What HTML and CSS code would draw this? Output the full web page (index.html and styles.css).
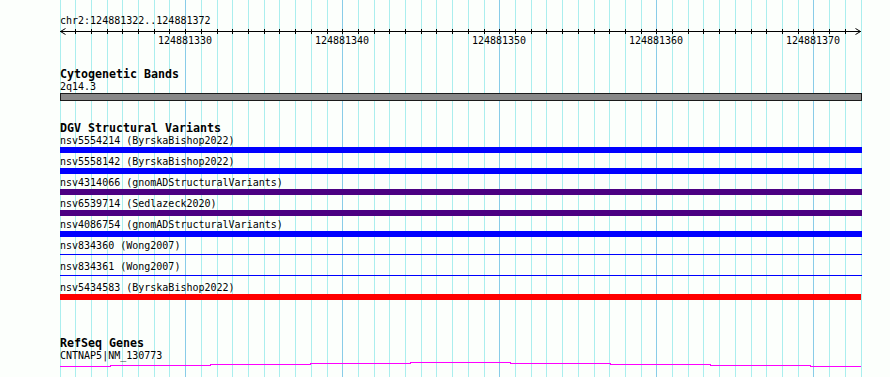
FILE: index.html
```html
<!DOCTYPE html>
<html lang="en">
<head>
<meta charset="utf-8">
<title>Genome browser</title>
<link rel="stylesheet" href="styles.css">
</head>
<body>
<div class="browser">
  <svg class="grid" width="802" height="377" viewBox="0 0 802 377" aria-hidden="true">
    <path class="grid-light" d="M0.5 0V377M15.5 0V377M31.5 0V377M47.5 0V377M62.5 0V377M78.5 0V377M94.5 0V377M109.5 0V377M141.5 0V377M157.5 0V377M172.5 0V377M188.5 0V377M204.5 0V377M219.5 0V377M235.5 0V377M251.5 0V377M267.5 0V377M298.5 0V377M314.5 0V377M329.5 0V377M345.5 0V377M361.5 0V377M376.5 0V377M392.5 0V377M408.5 0V377M424.5 0V377M455.5 0V377M471.5 0V377M486.5 0V377M502.5 0V377M518.5 0V377M534.5 0V377M549.5 0V377M565.5 0V377M581.5 0V377M612.5 0V377M628.5 0V377M643.5 0V377M659.5 0V377M675.5 0V377M691.5 0V377M706.5 0V377M722.5 0V377M738.5 0V377M769.5 0V377M785.5 0V377M801.5 0V377"/>
    <path class="grid-dark" d="M125.5 0V377M282.5 0V377M439.5 0V377M596.5 0V377M753.5 0V377"/>
  </svg>
  <div class="tracks">
    <div class="ruler">
      <div class="pos-label">chr2:124881322..124881372</div>
      <svg class="axis" width="802" height="20" viewBox="0 0 802 20">
        <path class="axis-line" d="M0 3.5H801M5.5 0.5L0.5 3.5L5.5 6.5M795.5 0.5L800.5 3.5L795.5 6.5"/>
        <path class="axis-ticks" d="M15.5 1V6M31.5 1V6M47.5 1V6M62.5 1V6M78.5 1V6M94.5 1V6M109.5 1V6M125.5 1V6M141.5 1V6M157.5 1V6M172.5 1V6M188.5 1V6M204.5 1V6M219.5 1V6M235.5 1V6M251.5 1V6M267.5 1V6M282.5 1V6M298.5 1V6M314.5 1V6M329.5 1V6M345.5 1V6M361.5 1V6M376.5 1V6M392.5 1V6M408.5 1V6M424.5 1V6M439.5 1V6M455.5 1V6M471.5 1V6M486.5 1V6M502.5 1V6M518.5 1V6M534.5 1V6M549.5 1V6M565.5 1V6M581.5 1V6M596.5 1V6M612.5 1V6M628.5 1V6M643.5 1V6M659.5 1V6M675.5 1V6M691.5 1V6M706.5 1V6M722.5 1V6M738.5 1V6M753.5 1V6M769.5 1V6M785.5 1V6"/>
        <text class="axis-num" x="125" y="16">124881330</text>
        <text class="axis-num" x="282" y="16">124881340</text>
        <text class="axis-num" x="439" y="16">124881350</text>
        <text class="axis-num" x="596" y="16">124881360</text>
        <text class="axis-num" x="753" y="16">124881370</text>
      </svg>
    </div>

    <section class="track track-cyto">
      <h2 class="track-title">Cytogenetic Bands</h2>
      <div class="feature-label">2q14.3</div>
      <div class="band"></div>
    </section>

    <section class="track track-dgv">
      <h2 class="track-title">DGV Structural Variants</h2>
      <div class="sv-row">
        <div class="feature-label">nsv5554214 (ByrskaBishop2022)</div>
        <div class="sv-bar sv-blue"></div>
      </div>
      <div class="sv-row">
        <div class="feature-label">nsv5558142 (ByrskaBishop2022)</div>
        <div class="sv-bar sv-blue"></div>
      </div>
      <div class="sv-row">
        <div class="feature-label">nsv4314066 (gnomADStructuralVariants)</div>
        <div class="sv-bar sv-purple"></div>
      </div>
      <div class="sv-row">
        <div class="feature-label">nsv6539714 (Sedlazeck2020)</div>
        <div class="sv-bar sv-purple"></div>
      </div>
      <div class="sv-row">
        <div class="feature-label">nsv4086754 (gnomADStructuralVariants)</div>
        <div class="sv-bar sv-blue"></div>
      </div>
      <div class="sv-row">
        <div class="feature-label">nsv834360 (Wong2007)</div>
        <div class="sv-bar sv-thin"></div>
      </div>
      <div class="sv-row">
        <div class="feature-label">nsv834361 (Wong2007)</div>
        <div class="sv-bar sv-thin"></div>
      </div>
      <div class="sv-row">
        <div class="feature-label">nsv5434583 (ByrskaBishop2022)</div>
        <div class="sv-bar sv-red"></div>
      </div>
    </section>

    <section class="track track-refseq">
      <h2 class="track-title">RefSeq Genes</h2>
      <div class="feature-label">CNTNAP5|NM_130773</div>
      <svg class="gene" width="802" height="6" viewBox="0 0 802 6">
        <path class="gene-line" d="M0 4.5H50V3.5H150V2.5H250V1.5H350V0.5H450V1.5H550V2.5H650V3.5H750V4.5H801"/>
      </svg>
    </section>
  </div>
</div>
</body>
</html>
```

FILE: styles.css
```css
html, body {
  margin: 0;
  padding: 0;
  overflow: hidden;
  background: #fcfffc;
}

body {
  font-family: "DejaVu Sans Mono", "Liberation Mono", monospace;
  color: #000;
}

.browser {
  position: relative;
  margin-left: 60px;
  width: 802px;
  height: 377px;
}

.grid {
  position: absolute;
  top: 0;
  left: 0;
  z-index: 0;
  shape-rendering: crispEdges;
}

.grid-light {
  stroke: #aaeeee;
  stroke-width: 1;
  fill: none;
}

.grid-dark {
  stroke: #88cce8;
  stroke-width: 1;
  fill: none;
}

.tracks {
  position: relative;
  z-index: 1;
  display: flex;
  flex-direction: column;
}

.ruler {
  padding-top: 15px;
  display: flex;
  flex-direction: column;
}

.pos-label,
.feature-label {
  font-size: 10px;
  line-height: 12px;
  height: 12px;
  white-space: pre;
}

.ruler .pos-label {
  height: 13px;
}

.axis {
  display: block;
  shape-rendering: crispEdges;
}

.axis-line,
.axis-ticks {
  stroke: #000;
  stroke-width: 1;
  fill: none;
}

.axis-line {
  shape-rendering: auto;
}

.axis-num {
  font-family: "DejaVu Sans Mono", "Liberation Mono", monospace;
  font-size: 10px;
  text-anchor: middle;
  fill: #000;
}

.track {
  display: flex;
  flex-direction: column;
}

.track-title {
  margin: 0;
  font-size: 11.63px;
  font-weight: bold;
  line-height: 13px;
  height: 13px;
  white-space: pre;
}

.track-cyto {
  margin-top: 20px;
}

.band {
  width: 800px;
  height: 6px;
  background: #888888;
  border: 1px solid #1a1a1a;
}

.track-dgv {
  margin-top: 21px;
}

.sv-row {
  height: 21px;
  display: flex;
  flex-direction: column;
}

.sv-bar {
  width: 802px;
  height: 6px;
}

.sv-blue {
  background: #0000ff;
}

.sv-purple {
  background: #4b0082;
}

.sv-red {
  width: 801px;
  background: #ff0000;
}

.sv-thin {
  height: 1px;
  margin: 2px 0 3px;
  background: #0000ff;
}

.track-refseq {
  margin-top: 34px;
}

.gene {
  display: block;
  shape-rendering: crispEdges;
}

.gene-line {
  stroke: #ff00ff;
  stroke-width: 1;
  fill: none;
}
```
